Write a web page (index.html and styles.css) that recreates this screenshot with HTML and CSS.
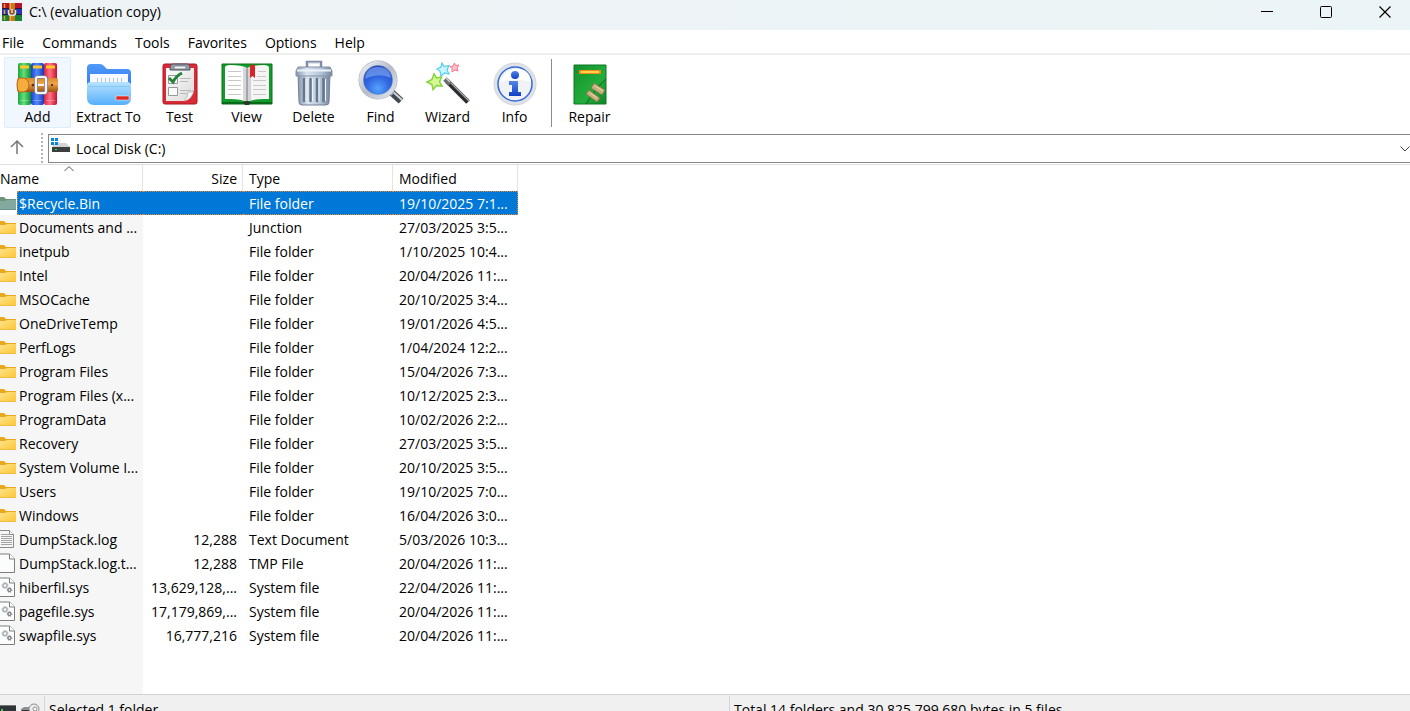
FILE: index.html
```html
<!DOCTYPE html>
<html lang="en">
<head>
    <meta charset="UTF-8">
    <meta name="viewport" content="width=device-width, initial-scale=1.0">
    <title>C:\ (evaluation copy)</title>
    <link rel="stylesheet" href="styles.css">
</head>
<body>
    <!-- shared icons and gradients -->
    <svg class="defs" width="0" height="0" aria-hidden="true">
        <defs>
            <linearGradient id="bookGreen"><stop offset="0" stop-color="#1fa53c"/><stop offset=".45" stop-color="#63e07c"/><stop offset="1" stop-color="#0d8a2b"/></linearGradient>
            <linearGradient id="bookBlue"><stop offset="0" stop-color="#1b3fd0"/><stop offset=".45" stop-color="#4f8bff"/><stop offset="1" stop-color="#1a35b8"/></linearGradient>
            <linearGradient id="bookRed"><stop offset="0" stop-color="#d91f3c"/><stop offset=".45" stop-color="#ff7385"/><stop offset="1" stop-color="#c5122e"/></linearGradient>
            <linearGradient id="belt" x2="0" y2="1"><stop offset="0" stop-color="#d9842a"/><stop offset=".4" stop-color="#f0a94c"/><stop offset="1" stop-color="#9c4f10"/></linearGradient>
            <linearGradient id="folderBack" x2="0" y2="1"><stop offset="0" stop-color="#4f9af8"/><stop offset="1" stop-color="#2a6cf0"/></linearGradient>
            <linearGradient id="folderFront" x2="0" y2="1"><stop offset="0" stop-color="#b9e2ff"/><stop offset="1" stop-color="#56b0fa"/></linearGradient>
            <linearGradient id="paper" x2="1" y2="1"><stop offset="0" stop-color="#ffffff"/><stop offset="1" stop-color="#d9d9d9"/></linearGradient>
            <linearGradient id="steel"><stop offset="0" stop-color="#8494aa"/><stop offset=".3" stop-color="#dbe5ef"/><stop offset=".7" stop-color="#b3c3d6"/><stop offset="1" stop-color="#76869e"/></linearGradient>
            <radialGradient id="lens" cx=".5" cy=".75" r=".7"><stop offset="0" stop-color="#55a2ff"/><stop offset=".5" stop-color="#3166e0"/><stop offset="1" stop-color="#2448bd"/></radialGradient>
            <linearGradient id="ring" x2="1" y2="1"><stop offset="0" stop-color="#eef1f5"/><stop offset=".5" stop-color="#b5bdc9"/><stop offset="1" stop-color="#e2e7ee"/></linearGradient>
            <linearGradient id="glyphBlue" x2="0" y2="1"><stop offset="0" stop-color="#5287e6"/><stop offset="1" stop-color="#123fc6"/></linearGradient>
            <linearGradient id="repairGreen" x2="1" y2="1"><stop offset="0" stop-color="#14902c"/><stop offset=".6" stop-color="#22ae3b"/><stop offset="1" stop-color="#12832a"/></linearGradient>
            <linearGradient id="yellow" x2="1" y2="1"><stop offset="0" stop-color="#ffe38f"/><stop offset="1" stop-color="#fdc52f"/></linearGradient>
        </defs>
        <symbol id="folder" viewBox="0 0 16 16">
            <path d="M0 1h4l2 2h10v6H0z" fill="#eaa81c"/>
            <path d="M0 5h5l2-1h9v10H0z" fill="url(#yellow)"/>
            <path d="M0 13.5h16" stroke="#eebd42"/>
        </symbol>
        <symbol id="folder-hidden" viewBox="0 0 16 16">
            <path d="M0 1h4l2 2h10v6H0z" fill="#6e9478"/>
            <path d="M0 5h5l2-1h9v10H0z" fill="#82a8a0"/>
            <path d="M0 13.5h16" stroke="#6b968f"/>
        </symbol>
        <symbol id="page" viewBox="0 0 16 20">
            <path d="M-1 1h10.500l5 5v13.500H-1z" fill="#fbfcfc" stroke="#7d7d7d"/>
            <path d="M9.500 1v5h5" fill="#fff" stroke="#7d7d7d"/>
        </symbol>
        <symbol id="text" viewBox="0 0 16 20">
            <path d="M-1 1.500h10.500l4 4v13H-1z" fill="#f7f7f7" stroke="#8a8a8a"/>
            <path d="M1 5.500h8M1 7.500h11M1 9.500h11M1 11.500h11M1 13.500h11M1 15.500h11" stroke="#a2a2a2"/>
            <path d="M9.500 1.500v4h4" fill="#fff" stroke="#8a8a8a"/>
        </symbol>
        <symbol id="system" viewBox="0 0 16 20">
            <use href="#page"/>
            <circle cx="5" cy="8.500" r="2" fill="none" stroke="#a9b1ba" stroke-width="1.500"/>
            <circle cx="5" cy="8.500" r="3" fill="none" stroke="#a9b1ba" stroke-dasharray="1.200 1.150"/>
            <circle cx="9.500" cy="13" r="1.500" fill="none" stroke="#6c7278" stroke-width="1.200"/>
            <circle cx="9.500" cy="13" r="2.300" fill="none" stroke="#6c7278" stroke-dasharray=".9 .9"/>
        </symbol>
    </svg>

    <div class="window">
        <header class="titlebar">
            <svg class="app-icon" width="20" height="18" viewBox="0 0 20 18" aria-hidden="true">
                <path fill="#b3162b" d="M0 0h20v6H0z"/><path fill="#2338b0" d="M0 6h20v6H0z"/><path fill="#178236" d="M0 12h20v6H0z"/>
                <path d="M0 5.500h20M0 11.500h20" stroke="#2b1740"/>
                <path d="M2.500 1v4M2.500 7v4M2.500 13v4" stroke="#e8a52c" stroke-width="1.500"/>
                <path fill="#c97818" d="M7 0h6v18H7z"/><path d="M8.500 0v18" stroke="#eeb04d"/>
                <path d="M6.500 7v3q0 2.500 3.500 2.500t3.500-2.500V7" fill="#92552a" stroke="#e3e3ea" stroke-width="1.500"/>
                <path d="M10 6v4" stroke="#f3dfa8" stroke-width="1.500"/>
            </svg>
            <h1>C:\ (evaluation copy)</h1>
            <div class="window-buttons">
                <button type="button" aria-label="Minimize"><svg width="12" height="12" viewBox="0 0 12 12"><path d="M0 5.500h12" stroke="#000"/></svg></button>
                <button type="button" aria-label="Maximize"><svg width="12" height="12" viewBox="0 0 12 12"><rect x=".5" y=".5" width="11" height="11" rx="1" fill="none" stroke="#000"/></svg></button>
                <button type="button" aria-label="Close"><svg width="12" height="12" viewBox="0 0 12 12"><path d="M.5.500l11 11m0-11l-11 11" stroke="#000" stroke-width="1.200"/></svg></button>
            </div>
        </header>

        <nav class="menubar">
            <a href="#">File</a>
            <a href="#">Commands</a>
            <a href="#">Tools</a>
            <a href="#">Favorites</a>
            <a href="#">Options</a>
            <a href="#">Help</a>
        </nav>

        <div class="toolbar">
            <button type="button" class="tool active">
                <svg width="44" height="44" viewBox="0 0 44 44">
                    <rect x="2" y="1" width="13" height="42" rx="2" fill="url(#bookGreen)"/>
                    <rect x="15" y="1" width="13" height="42" rx="2" fill="url(#bookBlue)"/>
                    <rect x="28" y="1" width="13" height="42" rx="2" fill="url(#bookRed)"/>
                    <path d="M4 5h9M17 5h9M30 5h9" stroke="#ffc629" stroke-width="3"/>
                    <path d="M4 38.500h9M17 38.500h9M30 38.500h9" stroke="#fff" stroke-opacity=".3"/>
                    <rect x="1" y="16" width="41" height="14" rx="2" fill="url(#belt)"/>
                    <path d="M3 16h5q5 2 5 7t-5 7H3q-2-2-2-7t2-7z" fill="#f5ae3c" stroke="#b4641a"/>
                    <circle cx="17" cy="23" r="1.500" fill="#65300c"/><circle cx="36" cy="23" r="1.200" fill="#65300c"/>
                    <rect x="20" y="15" width="10" height="16" rx="2" fill="none" stroke="#7b8291" stroke-width="3.500"/>
                    <rect x="20" y="15" width="10" height="16" rx="2" fill="none" stroke="#f3f4f8" stroke-width="2.200"/>
                    <path d="M22 23h6" stroke="#f3f4f8" stroke-width="2"/>
                </svg>
                Add
            </button>
            <button type="button" class="tool">
                <svg width="46" height="44" viewBox="0 0 46 44">
                    <path d="M1 6q0-4 4-4h9q2 0 4 2l3 3h20q4 0 4 4v24H1z" fill="url(#folderBack)"/>
                    <path d="M4 12h38v12H4z" fill="#f6f9fd"/>
                    <path d="M11.500 16v4M15.500 16v4M19.500 16v4M23.500 16v4M27.500 16v4M31.500 16v4M35.500 16v4" stroke="#b6c1cf"/>
                    <path d="M1 23q0-3 4-3h36q4 0 4 3v13q0 7-7 7H8q-7 0-7-7z" fill="url(#folderFront)"/>
                    <path d="M2 24.500h42" stroke="#84c8fa"/>
                    <path d="M30 34h13v4H30z" fill="#dd2a27" stroke="#fff" stroke-width=".5"/>
                </svg>
                Extract To
            </button>
            <button type="button" class="tool">
                <svg width="36" height="44" viewBox="0 0 36 44">
                    <rect x="1" y="2" width="34" height="40" rx="2" fill="#dc2936" stroke="#a71825"/>
                    <path d="M4 6h28v22l-9 11H4z" fill="url(#paper)"/>
                    <path d="M32 28q-1 3-6 2 0 6-4 9 8-1 10-11z" fill="#f7f7f7" stroke="#aaa" stroke-width=".6"/>
                    <path d="M8 7q0-5 3-5h14q3 0 3 5v1H8z" fill="#939ba5" stroke="#4b515b"/>
                    <rect x="12" y="4" width="12" height="3" rx="1" fill="#eef0f2" stroke="#656b74" stroke-width=".7"/>
                    <path d="M6.500 13.500h9v8h-9zM6.500 25.500h9v8h-9z" fill="#fafafa" stroke="#999"/>
                    <path d="M18 16.500h11M18 19.500h8M18 28.500h11M18 31.500h7" stroke="#b8b8b8"/>
                    <path d="M7 16l4 4q3-6 9-9" fill="none" stroke="#278339" stroke-width="3"/>
                </svg>
                Test
            </button>
            <button type="button" class="tool">
                <svg width="52" height="44" viewBox="0 0 52 44">
                    <path d="M1 2h50v40H1z" fill="#159b2b" stroke="#08721c"/>
                    <path d="M1 40h50v2H1z" fill="#076a18"/>
                    <path d="M4 5q1-2 5-2 12 0 17 3v34q-6-3-17-3H4z" fill="#fff"/>
                    <path d="M48 5q-1-2-5-2-12 0-17 3v34q6-3 17-3h5z" fill="#f5f5f5"/>
                    <path d="M22 5l4 2v33l-4-2zM30 5l-4 2v33l4-2z" fill="#b9bcbe" opacity=".6"/>
                    <path d="M26 6v34" stroke="#777"/>
                    <path d="M7 9.500h13M7 14.500h13M7 18.500h13M7 23.500h13M7 27.500h13M7 32.500h13M32 18.500h13M32 23.500h13M32 27.500h13M32 32.500h13M37 9.500h8M36 14.500h9" stroke="#c8c8c8"/>
                    <path d="M29 3h5v13l-2.500-2-2.500 2z" fill="#d82429"/>
                    <path d="M22 40q4-2 8 0l-2 3h-4z" fill="#25382a"/>
                </svg>
                View
            </button>
            <button type="button" class="tool">
                <svg width="40" height="46" viewBox="0 0 40 46">
                    <path d="M13 8V2h14v6" fill="none" stroke="#7d8ca3" stroke-width="2.500"/>
                    <path d="M14 3h12" stroke="#e0e7ef"/>
                    <path d="M4 14h32l-1 28q0 3-3 3H8q-3 0-3-3z" fill="url(#steel)" stroke="#72819a"/>
                    <path d="M10 19v22M16.500 19v22M23 19v22M29.500 19v22" stroke="#65758c" stroke-width="2.500" stroke-linecap="round"/>
                    <path d="M12 19v22M18.500 19v22M25 19v22M31.500 19v22" stroke="#eff4f9"/>
                    <path d="M4 7h32l2 4v5H2v-5z" fill="url(#steel)" stroke="#8391a6"/>
                    <path d="M3 10.500h34" stroke="#edf3fa" stroke-width="2"/>
                </svg>
                Delete
            </button>
            <button type="button" class="tool">
                <svg width="46" height="46" viewBox="0 0 46 46">
                    <path d="M31 30l12 11" stroke="#42484f" stroke-width="7"/>
                    <path d="M33 30l11 10" stroke="#d3d7dc" stroke-width="2"/>
                    <path d="M30 29l5 5" stroke="#a8adb5" stroke-width="5"/>
                    <circle cx="20" cy="20" r="17" fill="url(#lens)" stroke="#a3acb8" stroke-width="5"/>
                    <circle cx="20" cy="20" r="17" fill="none" stroke="url(#ring)" stroke-width="4"/>
                    <path d="M7 19q1-12 13-12t13 11q-12-6-26 1z" fill="#9ec5ff" opacity=".45"/>
                </svg>
                Find
            </button>
            <button type="button" class="tool">
                <svg width="46" height="46" viewBox="0 0 46 46">
                    <path d="M22 21l21 21" stroke="#292b2d" stroke-width="5"/>
                    <path d="M23 20l21 21" stroke="#a4a8ab" stroke-width="1.500"/>
                    <path d="M20 19l5 5" stroke="#686b6f" stroke-width="5"/>
                    <path d="M21 18l4 4" stroke="#d0d0d0" stroke-width="1.500"/>
                    <path d="M9 14l2.500 4 5-1-2 5 2.500 4-5.500-.5-3.500 4-1-5-5-2.500 5-2.500z" fill="#d5f894" stroke="#85d43e" stroke-width="1.500"/>
                    <path d="M17 3l2 3.500 5-1-2 4.500 2 4-4.500-1-3.500 3-1-5-3-2 4-2z" fill="#c9f6ff" stroke="#50cdf0" stroke-width="1.200"/>
                    <path d="M29.500 3l1 2.500 3.500-.5-2 3 1 3-3-1-3 2v-3.500l-2-2 3-.5z" fill="#ffc1cd" stroke="#f4798d"/>
                </svg>
                Wizard
            </button>
            <button type="button" class="tool">
                <svg width="44" height="44" viewBox="0 0 44 44">
                    <circle cx="22" cy="22" r="21" fill="#dfe3e8" stroke="#d0d6dd"/>
                    <circle cx="22" cy="22" r="17" fill="#f0f2f6" stroke="#386bd3" stroke-width="1.500"/>
                    <path d="M7 20q5-14 19-13 11 1 12 13-17-5-31 0z" fill="#fff"/>
                    <circle cx="22" cy="13" r="4" fill="url(#glyphBlue)"/>
                    <path d="M16 19h9v11h3v4H16v-4h3v-7h-3z" fill="url(#glyphBlue)"/>
                </svg>
                Info
            </button>
            <span class="separator"></span>
            <button type="button" class="tool">
                <svg width="34" height="42" viewBox="0 0 34 42">
                    <path d="M1 1h32v39H1z" fill="url(#repairGreen)" stroke="#0d7925"/>
                    <path d="M6 6h22v4H6z" fill="#f38a18"/><path d="M8 8h18" stroke="#ffd34c" stroke-width="2"/>
                    <path d="M33 15l-9 9-4 6-7 10" fill="none" stroke="#0c641e"/>
                    <path d="M21 19l11 7-3 5-11-7zM16 26l11 8-3 4-11-8z" fill="#c8ae7c" stroke="#806b43" stroke-width=".7"/>
                    <path d="M22 22l8 5M17 29l7 5" stroke="#eadab5"/>
                </svg>
                Repair
            </button>
        </div>

        <div class="addressbar">
            <button type="button" class="up" aria-label="Up one level">
                <svg width="16" height="16" viewBox="0 0 16 16"><path d="M8 15V2M2 8l6-6 6 6" fill="none" stroke="#777" stroke-width="1.500"/></svg>
            </button>
            <span class="grip"></span>
            <div class="path">
                <svg class="drive" width="20" height="16" viewBox="0 0 20 16" aria-hidden="true">
                    <path d="M4 5h11l4 4H1z" fill="#d2d4d5"/>
                    <path d="M1 9h18v5H1z" fill="#3c3e40"/><path d="M4 11h2v1H4z" fill="#38e05a"/>
                    <path d="M0 0h3v3H0zM4 0h3v3H4zM0 4h3v3H0zM4 4h3v3H4z" fill="#0788dc"/>
                </svg>
                <select aria-label="Current folder">
                    <option>Local Disk (C:)</option>
                </select>
                <svg class="chevron" width="10" height="6" viewBox="0 0 10 6" aria-hidden="true"><path d="M.5.500L5 5 9.500.500" fill="none" stroke="#444"/></svg>
            </div>
        </div>

        <main class="files">
            <table>
                <thead>
                    <tr>
                        <th class="name">Name<svg class="sort" width="10" height="6" viewBox="0 0 10 6" aria-hidden="true"><path d="M.5 5L5 .5 9.500 5" fill="none" stroke="#555"/></svg></th>
                        <th class="size">Size</th>
                        <th class="type">Type</th>
                        <th class="modified">Modified</th>
                    </tr>
                </thead>
                <tbody>
                    <tr class="selected"><td><div class="file"><svg><use href="#folder-hidden"/></svg><span>$Recycle.Bin</span></div></td><td></td><td>File folder</td><td>19/10/2025 7:1...</td></tr>
                    <tr><td><div class="file"><svg><use href="#folder"/></svg><span>Documents and ...</span></div></td><td></td><td>Junction</td><td>27/03/2025 3:5...</td></tr>
                    <tr><td><div class="file"><svg><use href="#folder"/></svg><span>inetpub</span></div></td><td></td><td>File folder</td><td>1/10/2025 10:4...</td></tr>
                    <tr><td><div class="file"><svg><use href="#folder"/></svg><span>Intel</span></div></td><td></td><td>File folder</td><td>20/04/2026 11:...</td></tr>
                    <tr><td><div class="file"><svg><use href="#folder"/></svg><span>MSOCache</span></div></td><td></td><td>File folder</td><td>20/10/2025 3:4...</td></tr>
                    <tr><td><div class="file"><svg><use href="#folder"/></svg><span>OneDriveTemp</span></div></td><td></td><td>File folder</td><td>19/01/2026 4:5...</td></tr>
                    <tr><td><div class="file"><svg><use href="#folder"/></svg><span>PerfLogs</span></div></td><td></td><td>File folder</td><td>1/04/2024 12:2...</td></tr>
                    <tr><td><div class="file"><svg><use href="#folder"/></svg><span>Program Files</span></div></td><td></td><td>File folder</td><td>15/04/2026 7:3...</td></tr>
                    <tr><td><div class="file"><svg><use href="#folder"/></svg><span>Program Files (x...</span></div></td><td></td><td>File folder</td><td>10/12/2025 2:3...</td></tr>
                    <tr><td><div class="file"><svg><use href="#folder"/></svg><span>ProgramData</span></div></td><td></td><td>File folder</td><td>10/02/2026 2:2...</td></tr>
                    <tr><td><div class="file"><svg><use href="#folder"/></svg><span>Recovery</span></div></td><td></td><td>File folder</td><td>27/03/2025 3:5...</td></tr>
                    <tr><td><div class="file"><svg><use href="#folder"/></svg><span>System Volume I...</span></div></td><td></td><td>File folder</td><td>20/10/2025 3:5...</td></tr>
                    <tr><td><div class="file"><svg><use href="#folder"/></svg><span>Users</span></div></td><td></td><td>File folder</td><td>19/10/2025 7:0...</td></tr>
                    <tr><td><div class="file"><svg><use href="#folder"/></svg><span>Windows</span></div></td><td></td><td>File folder</td><td>16/04/2026 3:0...</td></tr>
                    <tr><td><div class="file doc"><svg><use href="#text"/></svg><span>DumpStack.log</span></div></td><td>12,288</td><td>Text Document</td><td>5/03/2026 10:3...</td></tr>
                    <tr><td><div class="file doc"><svg><use href="#page"/></svg><span>DumpStack.log.t...</span></div></td><td>12,288</td><td>TMP File</td><td>20/04/2026 11:...</td></tr>
                    <tr><td><div class="file doc"><svg><use href="#system"/></svg><span>hiberfil.sys</span></div></td><td>13,629,128,...</td><td>System file</td><td>22/04/2026 11:...</td></tr>
                    <tr><td><div class="file doc"><svg><use href="#system"/></svg><span>pagefile.sys</span></div></td><td>17,179,869,...</td><td>System file</td><td>20/04/2026 11:...</td></tr>
                    <tr><td><div class="file doc"><svg><use href="#system"/></svg><span>swapfile.sys</span></div></td><td>16,777,216</td><td>System file</td><td>20/04/2026 11:...</td></tr>
                </tbody>
            </table>
        </main>

        <footer class="statusbar">
            <div class="status-icons">
                <svg width="40" height="14" viewBox="0 0 40 14" aria-hidden="true">
                    <path d="M0 2h16v10H0z" fill="#2f3436"/><path d="M0 2.500h16" stroke="#777"/><path d="M1 7h2" stroke="#45c951" stroke-width="2"/>
                    <path d="M21 6l3-2h9v6H21z" fill="#8b8f91"/><path d="M22 7.500h10" stroke="#303335"/>
                    <circle cx="34" cy="6" r="5" fill="#ececec" stroke="#8b8f91"/><circle cx="35" cy="6" r="2" fill="#fff" stroke="#8b8f91"/>
                </svg>
            </div>
            <div class="status-selected">Selected 1 folder</div>
            <div class="status-total">Total 14 folders and 30,825,799,680 bytes in 5 files</div>
        </footer>
    </div>
</body>
</html>
```
FILE: styles.css
```css
* {
    box-sizing: border-box;
}
body {
    margin: 0;
    font-family: "Open Sans", "Noto Sans", sans-serif;
    font-size: 14px;
    line-height: 20px;
    color: #000;
    background: #fff;
    overflow: hidden;
}
button {
    font: inherit;
    color: inherit;
    background: none;
    border: none;
    padding: 0;
}
svg {
    display: block;
    flex-shrink: 0;
}
.defs {
    position: absolute;
}
/* the window runs a little past the bottom of the screen */
.window {
    display: flex;
    flex-direction: column;
    height: calc(100vh + 10px);
}

/* title bar */
.titlebar {
    display: flex;
    align-items: center;
    height: 30px;
    padding: 0 0 7px 2px;
    background: linear-gradient(to right, #eff3f6, #ebf4f6);
}
.titlebar h1 {
    margin: 0 0 0 7px;
    font-size: 14px;
    font-weight: 400;
}
.window-buttons {
    display: flex;
    gap: 1px;
    margin-left: auto;
}
.window-buttons button {
    display: flex;
    align-items: center;
    justify-content: center;
    width: 58px;
    height: 22px;
}
.window-buttons button:last-child {
    width: 50px;
    margin-left: 4px;
}

/* menu */
.menubar {
    display: flex;
    align-items: center;
    gap: 18px;
    height: 25px;
    padding: 2px 0 0 2px;
    border-bottom: 2px solid #efefef;
}
.menubar a {
    color: #000;
    text-decoration: none;
}

/* toolbar */
.toolbar {
    display: flex;
    height: 78px;
    padding: 2px 4px;
}
.tool {
    display: flex;
    flex-direction: column;
    align-items: center;
    justify-content: flex-end;
    gap: 1px;
    width: 67px;
    height: 71px;
    border: 1px solid transparent;
    border-radius: 2px;
    white-space: nowrap;
}
.tool:nth-child(2) {
    width: 75px;
}
.tool.active,
.tool:hover {
    background: #f0f7fe;
    border-color: #deedfb;
}
.separator {
    width: 1px;
    height: 68px;
    margin: 2px 4px 0 3px;
    background: #8c8c8c;
}

/* address bar */
.addressbar {
    display: flex;
    height: 32px;
    border-bottom: 1px solid #dedede;
}
.up {
    display: flex;
    align-items: center;
    justify-content: center;
    width: 34px;
    height: 28px;
}
.grip {
    width: 2px;
    height: 30px;
    margin: 0 5px 0 7px;
    background: repeating-linear-gradient(#b5b5b5 0 2px, transparent 2px 4px);
}
.path {
    position: relative;
    flex: 1;
    height: 29px;
    margin-top: 1px;
    border: 1px solid #868686;
    border-right: none;
}
.path select {
    appearance: none;
    width: 100%;
    height: 100%;
    padding: 0 24px 0 27px;
    border: none;
    background: none;
    font: inherit;
    color: inherit;
}
.drive {
    position: absolute;
    top: 3px;
    left: 2px;
}
.chevron {
    position: absolute;
    top: 11px;
    right: 0;
}

/* file list */
.files {
    flex: 1;
    background: linear-gradient(to right, #f6f6f6 143px, #fff 143px);
}
table {
    width: 518px;
    table-layout: fixed;
    border-spacing: 0;
}
th {
    height: 26px;
    padding: 2px 6px 0;
    border-right: 1px solid #e4e4e4;
    background: #fff;
    font-weight: 400;
    text-align: left;
}
.name {
    position: relative;
    width: 143px;
    padding-left: 0;
}
.size {
    width: 100px;
    padding-right: 5px;
    text-align: right;
}
.type {
    width: 150px;
}
.modified {
    width: 125px;
}
.sort {
    position: absolute;
    top: 1px;
    left: 64px;
}
td {
    height: 24px;
    padding: 2px 6px 0;
    white-space: nowrap;
}
td:first-child {
    padding: 0;
}
td:nth-child(2) {
    text-align: right;
}
.file {
    display: flex;
    align-items: center;
    gap: 1px;
    height: 24px;
}
.file svg {
    width: 16px;
    height: 16px;
    margin-top: 2px;
}
.file.doc svg {
    height: 20px;
    margin-top: 0;
}
.file span {
    flex: 1;
    height: 24px;
    padding: 3px 0 0 2px;
}
.selected td + td {
    background: #0078d7;
    color: #fff;
    border: 1px dotted #e58a35;
    border-width: 1px 0;
}
.selected td:last-child {
    border-right-width: 1px;
}
.selected .file {
    background: #fff;
}
.selected .file span {
    padding: 2px 0 0 1px;
    background: #0078d7;
    color: #fff;
    border: 1px dotted #e58a35;
    border-right: none;
}

/* status bar */
.statusbar {
    display: flex;
    height: 27px;
    padding-top: 1px;
    background: #f0f0f0;
    border-top: 1px solid #d2d2d2;
}
.statusbar div {
    padding: 4px 4px 0;
}
.statusbar .status-icons {
    width: 44px;
    padding: 7px 0 0;
}
.status-selected {
    width: 685px;
    border-left: 1px solid #d5d5d5;
}
.status-total {
    flex: 1;
    border-left: 1px solid #d5d5d5;
}
```
